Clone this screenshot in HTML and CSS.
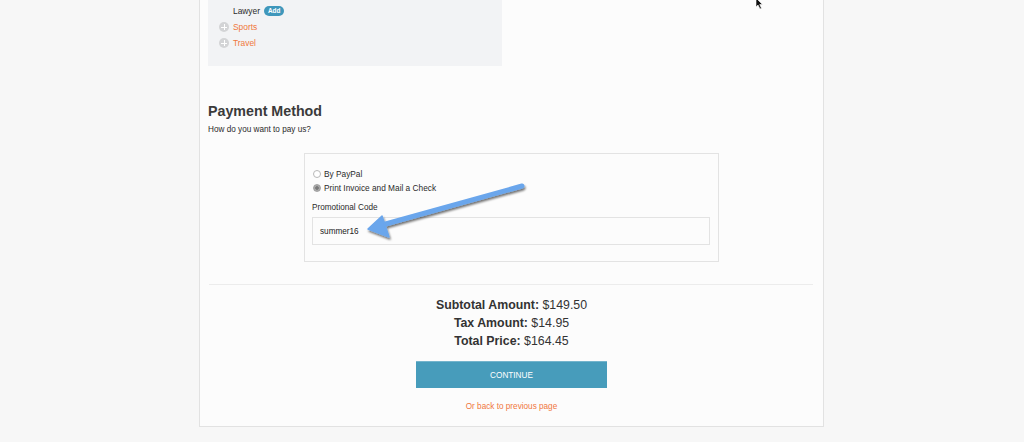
FILE: index.html
```html
<!DOCTYPE html>
<html>
<head>
<meta charset="utf-8">
<link rel="stylesheet" href="styles.css">
</head>
<body>
<div class="page">
  <div class="panel">
    <div class="cats">
      <div class="cat child">Lawyer <span class="badge">Add</span></div>
      <div class="cat"><span class="plus"></span><a class="link">Sports</a></div>
      <div class="cat"><span class="plus"></span><a class="link">Travel</a></div>
    </div>
    <h2 class="title">Payment Method</h2>
    <p class="subtitle">How do you want to pay us?</p>
    <div class="paybox">
      <label class="radio"><span class="dot"></span>By PayPal</label>
      <label class="radio"><span class="dot on"></span>Print Invoice and Mail a Check</label>
      <div class="field-label">Promotional Code</div>
      <div class="input">summer16</div>
    </div>
    <div class="divider"></div>
    <div class="totals">
      <div><b>Subtotal Amount:</b> $149.50</div>
      <div><b>Tax Amount:</b> $14.95</div>
      <div><b>Total Price:</b> $164.45</div>
    </div>
    <div class="btnrow"><button class="continue">CONTINUE</button></div>
    <div class="backrow"><a class="link back">Or back to previous page</a></div>
  </div>
  <svg class="overlay" width="1024" height="442" viewBox="0 0 1024 442">
    <defs>
      <filter id="sh" x="-20%" y="-40%" width="140%" height="180%">
        <feDropShadow dx="1" dy="2" stdDeviation="1.3" flood-color="#000" flood-opacity="0.55"/>
      </filter>
    </defs>
    <g filter="url(#sh)">
      <line x1="522" y1="186" x2="382" y2="225" stroke="#6aa6ec" stroke-width="5" stroke-linecap="round"/>
      <polygon points="368,229 382,216 389,237" fill="#6aa6ec" stroke="#6aa6ec" stroke-width="1.5" stroke-linejoin="round"/>
    </g>
    <polygon points="756,-2 756,7 758,5 760,9 761.5,8.3 759.7,4.5 762.5,4.5" fill="#111" stroke="#fff" stroke-width="0.6"/>
  </svg>
</div>
</body>
</html>
```
FILE: styles.css
```css
html, body {
  margin: 0;
  padding: 0;
  background: #f7f7f7;
}
body {
  font-family: "Liberation Sans", Arial, Helvetica, sans-serif;
  color: #2b2b2b;
  font-size: 8.2px;
  width: 1024px;
  height: 442px;
  overflow: hidden;
}
.page {
  position: relative;
  width: 1024px;
  height: 442px;
}
.panel {
  box-sizing: border-box;
  width: 625px;
  margin-left: 199px;
  background: #fcfcfc;
  border: 1px solid #e2e2e2;
  border-top: none;
  padding: 0 8px 13px 8px;
}
.cats {
  width: 294px;
  background: #f2f3f5;
  padding: 3px 0 15px 11px;
  box-sizing: border-box;
}
.cat {
  display: flex;
  align-items: center;
  height: 16px;
  line-height: 16px;
  font-size: 8.4px;
}
.cat.child {
  padding-left: 14px;
  color: #2b2b2b;
}
.badge {
  display: inline-block;
  margin-left: 4px;
  background: #3f97bb;
  color: #fff;
  font-weight: bold;
  font-size: 6.4px;
  line-height: 10px;
  height: 10px;
  padding: 0 4px;
  border-radius: 5px;
}
.plus {
  position: relative;
  width: 10px;
  height: 10px;
  border-radius: 50%;
  background: #d3d4d6;
  margin-right: 4px;
  flex: none;
}
.plus::before, .plus::after {
  content: "";
  position: absolute;
  background: #fff;
}
.plus::before {
  left: 2px; right: 2px; top: 4.5px; height: 1px;
}
.plus::after {
  top: 2px; bottom: 2px; left: 4.5px; width: 1px;
}
.link {
  color: #f0773c;
  text-decoration: none;
}
.title {
  margin: 37px 0 0 0;
  font-size: 14.25px;
  line-height: 17px;
  font-weight: bold;
  color: #3a3a3a;
}
.subtitle {
  margin: 4px 0 0 0;
  font-size: 8.2px;
  line-height: 12px;
}
.paybox {
  box-sizing: border-box;
  width: 415px;
  margin: 17px auto 0 auto;
  border: 1px solid #e3e3e3;
  background: #fcfcfc;
  padding: 13px 8px 16px 7px;
}
.radio {
  display: flex;
  align-items: center;
  height: 14px;
  line-height: 14px;
  font-size: 8.3px;
}
.dot {
  box-sizing: border-box;
  width: 8px;
  height: 8px;
  border-radius: 50%;
  border: 1px solid #b8b8b8;
  background: #fff;
  margin: 0 3px 0 1px;
}
.dot.on {
  background: radial-gradient(circle, #7a7a7a 0 1.5px, #a9a9a9 2px);
  border-color: #a0a0a0;
}
.field-label {
  margin-top: 7px;
  line-height: 12px;
  font-size: 8.2px;
}
.input {
  box-sizing: border-box;
  margin-top: 3px;
  height: 28px;
  border: 1px solid #e3e3e3;
  background: #fcfcfc;
  padding-left: 7px;
  display: flex;
  align-items: center;
  font-size: 8.2px;
  color: #222;
}
.divider {
  height: 1px;
  background: #ececec;
  margin: 22px 2px 0 1px;
}
.totals {
  margin-top: 11px;
  text-align: center;
  font-size: 12.35px;
  line-height: 18px;
  color: #333;
}
.btnrow {
  display: flex;
  justify-content: center;
  margin-top: 11px;
}
.continue {
  box-sizing: border-box;
  width: 191px;
  height: 27px;
  border: none;
  border-top: 1px solid #74b4cc;
  background: #479cbb;
  color: #fff;
  font-family: "Liberation Sans", Arial, sans-serif;
  font-size: 8.2px;
  padding: 0;
}
.backrow {
  margin-top: 13px;
  text-align: center;
  line-height: 12px;
  font-size: 8.2px;
}
.overlay {
  position: absolute;
  left: 0;
  top: 0;
  pointer-events: none;
}
```
